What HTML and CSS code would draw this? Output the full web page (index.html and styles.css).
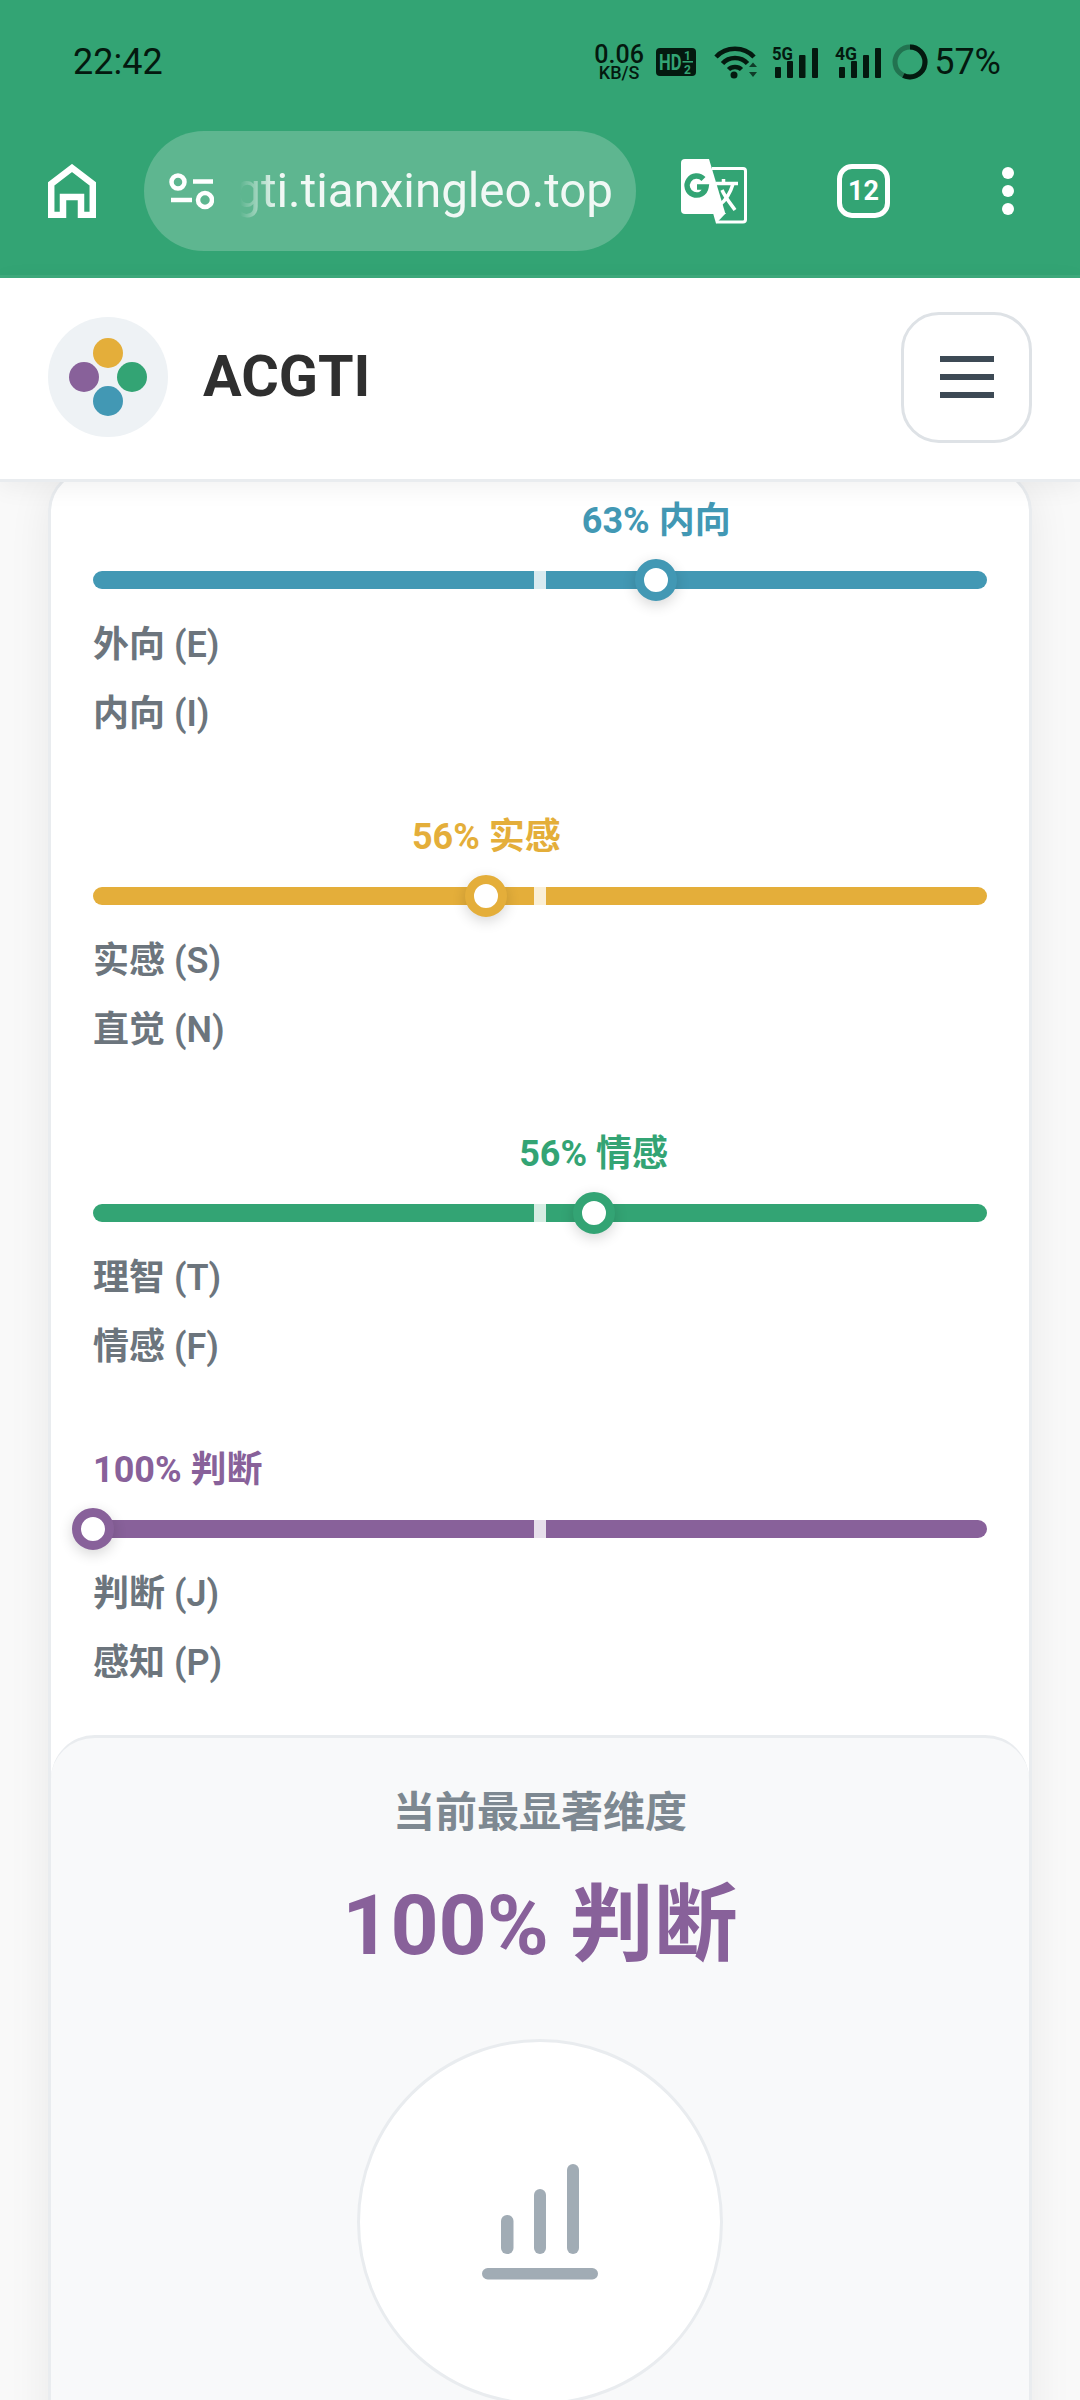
FILE: index.html
```html
<!DOCTYPE html>
<html lang="zh-CN">
<head>
    <meta charset="UTF-8">
    <meta name="viewport" content="width=device-width, initial-scale=1.0">
    <title>ACGTI</title>
    <link rel="stylesheet" href="styles.css">
</head>
<body>
    <div class="browser-top">
        <div class="status-bar">
            <span class="status-time">22:42</span>
            <div class="status-icons">
                <div class="net-speed"><span class="net-num">0.06</span><span class="net-unit">KB/S</span></div>
                <svg class="icon-hd" width="40" height="28" viewBox="0 0 40 28">
                    <rect width="40" height="28" rx="4" fill="#04190f"/>
                    <text class="hd-text" transform="translate(3 22) scale(0.95 1.3)">HD</text>
                    <text x="28" y="11.5" class="hd-small">1</text>
                    <text x="28" y="25.6" class="hd-small">2</text>
                    <rect x="26.5" y="13" width="10.5" height="1.6" fill="#33a474"/>
                </svg>
                <svg class="icon-wifi" width="44" height="34" viewBox="0 0 44 34" fill="none" stroke="#04190f" stroke-width="4.5">
                    <path d="M2 12 C12 1 30 1 40 12"/>
                    <path d="M8.5 18.5 C15 11 27 11 33.5 18.5"/>
                    <path d="M14.5 24.5 C18 21 24 21 27.5 24.5"/>
                    <circle cx="20" cy="30" r="3.5" fill="#04190f" stroke="none"/>
                    <path d="M35 22 L39 17.5 L43 22 Z M35 27 H43 L39 32 Z" fill="#04190f" opacity=".75" stroke="none"/>
                </svg>
                <svg class="icon-signal" width="46" height="36" viewBox="0 -4 46 36" fill="#04190f">
                    <text x="0" y="14" class="signal-text" textLength="21" lengthAdjust="spacingAndGlyphs">5G</text>
                    <rect x="3" y="21" width="6" height="11" rx="1"/>
                    <rect x="15" y="15" width="6" height="17" rx="1"/>
                    <rect x="27" y="9" width="6.5" height="23" rx="1"/>
                    <rect x="40" y="2" width="6" height="30" rx="1"/>
                </svg>
                <svg class="icon-signal" width="46" height="36" viewBox="0 -4 46 36" fill="#04190f">
                    <text x="0" y="14" class="signal-text" textLength="22" lengthAdjust="spacingAndGlyphs">4G</text>
                    <rect x="4" y="21" width="6" height="11" rx="1"/>
                    <rect x="16" y="15" width="6" height="17" rx="1"/>
                    <rect x="28" y="9" width="6" height="23" rx="1"/>
                    <rect x="40" y="2" width="6" height="30" rx="1"/>
                </svg>
                <svg class="icon-ring" width="36" height="36" viewBox="0 0 36 36" fill="none" stroke-width="5">
                    <circle cx="18" cy="18" r="15" stroke="#04190f" opacity=".35"/>
                    <circle cx="18" cy="18" r="15" stroke="#04190f" stroke-dasharray="53.7 94.2" transform="rotate(-90 18 18)"/>
                </svg>
                <span class="status-battery">57%</span>
            </div>
        </div>
        <div class="toolbar">
            <svg class="btn-home" width="48" height="54" viewBox="0 0 48 54" fill="none" stroke="#fff" stroke-width="6.5">
                <path d="M3.2 51 V20 L24 4 L44.8 20 V51 H33 V33 H15 V51 Z"/>
            </svg>
            <div class="url-pill">
                <svg class="icon-tune" width="46" height="38" viewBox="0 0 46 38" fill="none" stroke="#fff" stroke-width="4.5">
                    <circle cx="10" cy="10" r="6.5"/>
                    <path d="M25 9.5 H45"/>
                    <circle cx="37" cy="28" r="7"/>
                    <path d="M3 28 H24"/>
                </svg>
                <div class="url-box"><span class="url-text">gti.tianxingleo.top</span></div>
            </div>
            <svg class="btn-translate" width="66" height="65" viewBox="11 9 66 65">
                <path d="M15 9 H39 L55.5 64 H15 Q11 64 11 60 V13 Q11 9 15 9 Z" fill="#fff"/>
                <path d="M42 18.5 H73 Q75.5 18.5 75.5 21 V69.5 Q75.5 72 73 72 H46" fill="none" stroke="#fff" stroke-width="3"/>
                <path d="M43 63 H56 L46 73.5 Z" fill="#fff"/>
                <path d="M33.5 29 A9.5 9.5 0 1 0 36 37 H27" fill="none" stroke="#33a474" stroke-width="5.5"/>
                <path d="M46 33.5 H68 M53.5 29 V33 M63 34 C60 44 55 51 49.5 55 M52 40 C55 47 60 53 65 60" fill="none" stroke="#fff" stroke-width="3.5"/>
            </svg>
            <div class="btn-tabs">12</div>
            <div class="btn-more"><i></i><i></i><i></i></div>
        </div>
    </div>

    <header class="site-header">
        <svg class="logo" width="120" height="120" viewBox="0 0 120 120">
            <circle cx="60" cy="60" r="60" fill="#eef2f5"/>
            <circle cx="60" cy="36" r="15" fill="#e4ae3a"/>
            <circle cx="36" cy="60" r="15" fill="#88619a"/>
            <circle cx="84" cy="60" r="15" fill="#33a474"/>
            <circle cx="60" cy="84" r="15" fill="#4298b4"/>
        </svg>
        <span class="site-name">ACGTI</span>
        <button class="menu-btn"><i></i><i></i><i></i></button>
    </header>

    <main class="result-card">
        <div class="dimensions">
            <section class="dim dim-blue">
                <div class="dim-value" style="margin-left: 63%">63% 内向</div>
                <div class="track"><span class="track-mid"></span><span class="thumb" style="left: 63%"></span></div>
                <div class="dim-labels"><span>外向 (E)</span><span>内向 (I)</span></div>
            </section>
            <section class="dim dim-yellow">
                <div class="dim-value" style="margin-left: 44%">56% 实感</div>
                <div class="track"><span class="track-mid"></span><span class="thumb" style="left: 44%"></span></div>
                <div class="dim-labels"><span>实感 (S)</span><span>直觉 (N)</span></div>
            </section>
            <section class="dim dim-green">
                <div class="dim-value" style="margin-left: 56%">56% 情感</div>
                <div class="track"><span class="track-mid"></span><span class="thumb" style="left: 56%"></span></div>
                <div class="dim-labels"><span>理智 (T)</span><span>情感 (F)</span></div>
            </section>
            <section class="dim dim-purple">
                <div class="dim-value at-start">100% 判断</div>
                <div class="track"><span class="track-mid"></span><span class="thumb" style="left: 0%"></span></div>
                <div class="dim-labels"><span>判断 (J)</span><span>感知 (P)</span></div>
            </section>
        </div>

        <section class="top-dim">
            <h2 class="top-dim-title">当前最显著维度</h2>
            <div class="top-dim-value">100% 判断</div>
            <div class="top-dim-circle">
                <svg width="116" height="116" viewBox="0 0 116 116" fill="#a1acb5">
                    <rect x="19" y="51" width="12.5" height="39" rx="6"/>
                    <rect x="52" y="25" width="12" height="65" rx="6"/>
                    <rect x="85" y="0" width="12" height="90" rx="6"/>
                    <rect x="0" y="104" width="116" height="11.5" rx="5.75"/>
                </svg>
            </div>
        </section>
    </main>
</body>
</html>
```
FILE: styles.css
```css
* {
    box-sizing: border-box;
}
html, body {
    margin: 0;
    padding: 0;
}
body {
    width: 1080px;
    height: 2400px;
    overflow: hidden;
    background-color: #f9f9f9;
    font-family: Roboto, "Noto Sans CJK SC", sans-serif;
    color: #333;
}

/* browser chrome */
.browser-top {
    height: 278px;
    background-color: #33a474;
    border-bottom: 3px solid #3fab7d;
}
.status-bar {
    display: flex;
    align-items: center;
    justify-content: space-between;
    height: 124px;
    padding: 0 79px 0 73px;
    color: #04190f;
}
.status-time {
    font-size: 36px;
    line-height: 42px;
}
.status-icons {
    display: flex;
    align-items: center;
}
.net-speed {
    display: flex;
    flex-direction: column;
    align-items: center;
    width: 50px;
    font-weight: 500;
}
.net-num {
    font-size: 25px;
    line-height: 21px;
}
.net-unit {
    font-size: 18px;
    line-height: 16px;
}
.icon-hd {
    margin-left: 12px;
}
.hd-text {
    font: 700 17.5px Roboto, sans-serif;
    fill: #33a474;
}
.hd-small {
    font: 700 12px Roboto, sans-serif;
    fill: #33a474;
}
.icon-wifi {
    margin-left: 18px;
}
.icon-signal {
    margin: -4px 0 0 14px;
}
.icon-signal + .icon-signal {
    margin-left: 17px;
}
.signal-text {
    font: 700 18.5px Roboto, sans-serif;
}
.icon-ring {
    margin-left: 11px;
}
.status-battery {
    margin-left: 6px;
    font-size: 36px;
    line-height: 42px;
}

.toolbar {
    display: flex;
    align-items: center;
    height: 120px;
    margin-top: 7px;
    padding-left: 48px;
}
.url-pill {
    display: flex;
    align-items: center;
    width: 492px;
    height: 120px;
    margin-left: 48px;
    padding: 0 23px 0 24px;
    border-radius: 60px;
    background-color: #5eb690;
}
.url-box {
    display: flex;
    justify-content: flex-end;
    flex: 1;
    margin-left: 18px;
    overflow: hidden;
    -webkit-mask-image: linear-gradient(to right, transparent 8px, #000 46px);
    mask-image: linear-gradient(to right, transparent 8px, #000 46px);
}
.url-text {
    flex-shrink: 0;
    font-size: 47.5px;
    line-height: 64px;
    color: #f1f8f5;
}
.btn-translate {
    margin-left: 45px;
}
.btn-tabs {
    width: 53px;
    height: 54px;
    margin-left: 90px;
    border: 5px solid #fff;
    border-radius: 15px;
    font-size: 27px;
    font-weight: 700;
    line-height: 44px;
    text-align: center;
    color: #fff;
}
.btn-more {
    display: flex;
    flex-direction: column;
    gap: 6px;
    margin-left: 112px;
}
.btn-more i {
    display: block;
    width: 12px;
    height: 12px;
    border-radius: 50%;
    background-color: #fff;
}

/* site header */
.site-header {
    position: relative;
    z-index: 2;
    display: flex;
    align-items: center;
    height: 204px;
    padding: 0 48px 3px;
    background: #fff;
    border-bottom: 3px solid #e9ecef;
    box-shadow: 0 5px 24px rgba(0, 0, 0, 0.06);
}
.site-name {
    margin: -2px 0 0 35px;
    font-size: 57.5px;
    font-weight: 700;
    color: #2f2f2f;
}
.menu-btn {
    display: flex;
    flex-direction: column;
    align-items: center;
    justify-content: center;
    gap: 12px;
    width: 131px;
    height: 131px;
    margin-left: auto;
    padding: 0;
    background: #fff;
    border: 3px solid #dee2e6;
    border-radius: 38px;
}
.menu-btn i {
    display: block;
    width: 54px;
    height: 6px;
    background-color: #3d4a55;
}

/* result card */
.result-card {
    width: 984px;
    height: 2000px;
    margin: -14px 0 0 48px;
    background: #fff;
    border: 3px solid #e9ecef;
    border-radius: 44px;
    box-shadow: 0 8px 44px rgba(0, 0, 0, 0.07);
}
.dimensions {
    padding: 25px 42px 0;
}
.dim {
    height: 316.3px;
}
.dim-blue { color: #4298b4; }
.dim-yellow { color: #e4ae3a; }
.dim-green { color: #33a474; }
.dim-purple { color: #88619a; }

.dim-value {
    width: max-content;
    font-size: 36px;
    font-weight: 700;
    line-height: 50px;
    transform: translateX(-50%);
}
.dim-value.at-start {
    transform: none;
}
.track {
    position: relative;
    height: 18px;
    margin-top: 25px;
    border-radius: 9px;
    background-color: currentColor;
}
.track-mid {
    position: absolute;
    top: 0;
    left: 50%;
    width: 12px;
    height: 18px;
    margin-left: -6px;
    background-color: rgba(255, 255, 255, 0.8);
}
.thumb {
    position: absolute;
    top: 50%;
    width: 42px;
    height: 42px;
    margin: -21px 0 0 -21px;
    border: 9px solid currentColor;
    border-radius: 50%;
    background-color: #fff;
    box-shadow: 0 4px 14px rgba(0, 0, 0, 0.16);
}
.dim-labels {
    display: flex;
    flex-direction: column;
    gap: 19px;
    margin-top: 31px;
    font-size: 36px;
    font-weight: 600;
    line-height: 50px;
    color: #6c757d;
}

.top-dim {
    height: 760px;
    margin-top: -26px;
    padding-top: 45px;
    text-align: center;
    background-color: #f8f9fa;
    border-top: 3px solid #e9ecef;
    border-radius: 44px 44px 0 0;
}
.top-dim-title {
    margin: 0;
    font-size: 42px;
    font-weight: 700;
    line-height: 60px;
    color: #7d8891;
}
.top-dim-value {
    margin-top: 33px;
    font-size: 84px;
    font-weight: 700;
    line-height: 100px;
    color: #88619a;
}
.top-dim-circle {
    display: flex;
    align-items: center;
    justify-content: center;
    width: 366px;
    height: 366px;
    margin: 63px auto 0;
    background: #fff;
    border: 3px solid #e9ecef;
    border-radius: 50%;
}
```
